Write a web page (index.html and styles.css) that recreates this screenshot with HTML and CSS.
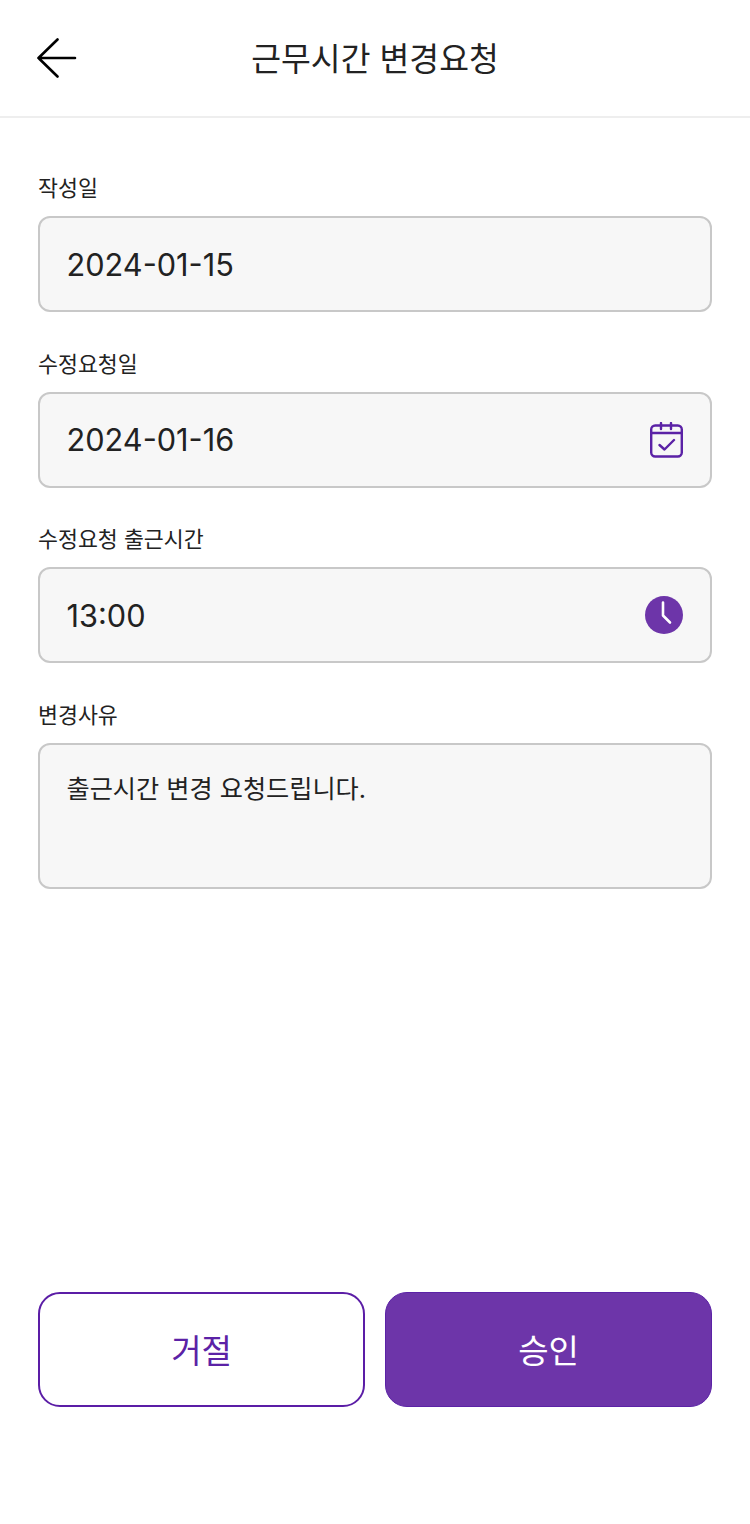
FILE: index.html
```html
<!DOCTYPE html>
<html lang="ko">
<head>
<meta charset="utf-8">
<title>근무시간 변경요청</title>
<link rel="stylesheet" href="styles.css">
</head>
<body>
<div class="page">
  <header class="header">
    <svg class="back" width="40" height="40" viewBox="0 0 40 40" fill="none" stroke="#000" stroke-width="2.6" stroke-linecap="round" stroke-linejoin="round"><path d="M38 20H1.500M20.500 1.500 1.500 20l19 18.500"/></svg>
    <h1 class="title">근무시간 변경요청</h1>
  </header>
  <main class="form">
    <div class="field">
      <div class="label">작성일</div>
      <div class="input"><span class="value">2024-01-15</span></div>
    </div>
    <div class="field">
      <div class="label">수정요청일</div>
      <div class="input"><span class="value">2024-01-16</span>
        <svg class="cal" width="33" height="36" viewBox="0 0 33 36" fill="none" stroke="#5b22a6" stroke-width="2.400" stroke-linecap="round" stroke-linejoin="round"><rect x="1.200" y="3.500" width="30.600" height="31" rx="4"/><path d="M1.200 11h30.600M11 1v6M21 1v6M9.500 23l5 4.500 9.500-9.500"/></svg>
      </div>
    </div>
    <div class="field">
      <div class="label">수정요청 출근시간</div>
      <div class="input"><span class="value">13:00</span>
        <svg class="clock" width="38" height="38" viewBox="0 0 38 38" fill="none"><circle cx="19" cy="19" r="19" fill="#6d35a9"/><path d="M18 6.500V19.500L25 26.500" stroke="#fff" stroke-width="2.600" stroke-linecap="round" stroke-linejoin="round"/></svg>
      </div>
    </div>
    <div class="field">
      <div class="label">변경사유</div>
      <div class="input area"><span class="reason">출근시간 변경 요청드립니다.</span></div>
    </div>
  </main>
  <div class="actions">
    <button class="btn reject"><span class="btn-text">거절</span></button>
    <button class="btn approve"><span class="btn-text">승인</span></button>
  </div>
</div>
</body>
</html>
```

FILE: styles.css
```css
* { box-sizing: border-box; }
html, body { margin: 0; padding: 0; background: #fff; }
body { font-family: Inter, "Noto Sans CJK KR", sans-serif; color: #222; }
.page { width: 750px; height: 1524px; display: flex; flex-direction: column; }
.header { height: 118px; flex: none; border-bottom: 2px solid #eee; display: flex; align-items: center; justify-content: center; position: relative; padding-top: 5px; }
.back { position: absolute; left: 37px; top: 38px; }
.title { margin: 0; font-size: 32.400px; font-weight: 400; line-height: 1; color: #222; }
.form { padding: 54px 38px 0; display: flex; flex-direction: column; gap: 35.500px; flex: 1; }
.field { display: flex; flex-direction: column; gap: 12px; }
.label { font-size: 21.700px; line-height: 32px; height: 32px; color: #222; }
.input { height: 96px; background: #f7f7f7; border: 2px solid #c8c8c8; border-radius: 12px; padding: 0 27px 0 26.500px; display: flex; align-items: center; justify-content: space-between; }
.value { font-size: 30.700px; line-height: 1; color: #222; padding-top: 2px; }
.area { height: 146px; align-items: flex-start; padding-top: 26.500px; }
.reason { font-size: 25.200px; line-height: 36px; color: #222; }
.actions { display: grid; grid-template-columns: 1fr 1fr; gap: 20px; padding: 0 38px 117px; }
.btn { height: 115px; border-radius: 22px; font: inherit; font-size: 33px; padding: 0 0 1px; }
.btn-text { display: block; }
.reject { background: #fff; border: 2px solid #5b1da6; color: #5b22a6; }
.approve { background: #6d35a9; border: 1px solid #5b22a6; color: #fff; }
```
